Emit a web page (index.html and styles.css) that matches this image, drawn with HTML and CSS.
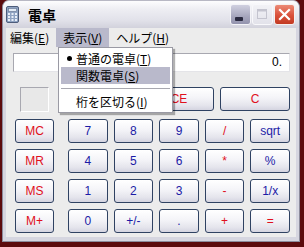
FILE: index.html
```html
<!DOCTYPE html>
<html lang="ja">
<head>
  <meta charset="UTF-8" />
  <title>電卓</title>
  <link rel="stylesheet" href="styles.css">
</head>
<body>
  <div class="window">
    <div class="titlebar">
      <svg class="app-icon" width="13" height="17" viewBox="0 0 13 17">
        <rect x="0.5" y="0.5" width="12" height="16" rx="1.5" fill="#8fa3c2" stroke="#4d5c7a"/>
        <rect x="2.5" y="2.5" width="8" height="3" fill="#e2ebf5" stroke="#5e6d8c" stroke-width="0.6"/>
        <rect x="2" y="7" width="2" height="2" fill="#e8eef8"/>
        <rect x="5.5" y="7" width="2" height="2" fill="#e8eef8"/>
        <rect x="9" y="7" width="2" height="2" fill="#e8eef8"/>
        <rect x="2" y="10" width="2" height="2" fill="#e8eef8"/>
        <rect x="5.5" y="10" width="2" height="2" fill="#e8eef8"/>
        <rect x="9" y="10" width="2" height="2" fill="#e8eef8"/>
        <rect x="2" y="13" width="2" height="2" fill="#e8eef8"/>
        <rect x="5.5" y="13" width="2" height="2" fill="#e8eef8"/>
        <rect x="9" y="13" width="2" height="2" fill="#e8eef8"/>
      </svg>
      <span class="title">電卓</span>
      <div class="caption">
        <span class="cap cap-min">
          <svg width="19" height="19" viewBox="0 0 19 19"><rect x="4" y="12" width="8" height="4" rx="1" fill="#2a2a40"/></svg>
        </span>
        <span class="cap cap-max">
          <svg width="19" height="19" viewBox="0 0 19 19"><rect x="4.5" y="4.5" width="9" height="9" fill="none" stroke="#c4c4cf"/><rect x="4.5" y="4.5" width="9" height="2" fill="#c4c4cf"/></svg>
        </span>
        <span class="cap cap-close">
          <svg width="19" height="19" viewBox="0 0 19 19"><path d="M5 5 L14 14 M14 5 L5 14" stroke="#fff" stroke-width="2.2" stroke-linecap="square"/></svg>
        </span>
      </div>
    </div>

    <div class="frame">
      <div class="client">
        <div class="menubar">
          <span class="menu-item">編集(<u>E</u>)</span>
          <span class="menu-item active">表示(<u>V</u>)</span>
          <span class="menu-item">ヘルプ(<u>H</u>)</span>
        </div>

        <div class="display">0.</div>

        <div class="keypad">
          <div class="mem-col">
            <div class="mem-slot"><div class="mem-indicator"></div></div>
            <button class="key red">MC</button>
            <button class="key red">MR</button>
            <button class="key red">MS</button>
            <button class="key red">M+</button>
          </div>

          <div class="main-col">
            <div class="top-row">
              <!-- Back, hidden under the open menu -->
              <button class="key red" aria-label="Back"></button>
              <button class="key red">CE</button>
              <button class="key red">C</button>
            </div>
            <div class="grid">
              <button class="key blue">7</button>
              <button class="key blue">8</button>
              <button class="key blue">9</button>
              <button class="key red">/</button>
              <button class="key blue">sqrt</button>

              <button class="key blue">4</button>
              <button class="key blue">5</button>
              <button class="key blue">6</button>
              <button class="key red">*</button>
              <button class="key blue">%</button>

              <button class="key blue">1</button>
              <button class="key blue">2</button>
              <button class="key blue">3</button>
              <button class="key red">-</button>
              <button class="key blue">1/x</button>

              <button class="key blue">0</button>
              <button class="key blue">+/-</button>
              <button class="key blue">.</button>
              <button class="key red">+</button>
              <button class="key red">=</button>
            </div>
          </div>
        </div>
      </div>
    </div>

    <!-- 表示 menu, open -->
    <div class="dropdown">
      <div class="drop-item"><span class="bullet"></span>普通の電卓(<u>T</u>)</div>
      <div class="drop-item hover">関数電卓(<u>S</u>)</div>
      <div class="drop-sep"></div>
      <div class="drop-item">桁を区切る(<u>I</u>)</div>
    </div>
  </div>
</body>
</html>
```

FILE: styles.css
```css
body {
  margin: 0;
  padding: 0;
  background: #5c0b0d;
  font-family: 'Noto Sans CJK JP', 'Liberation Sans', sans-serif;
  font-size: 12px;
  color: #000;
}
.window {
  position: relative;
  margin-left: 2px;
  width: 296px;
  height: 240px;
  border: 1px solid #8c8c9c;
  border-top-color: #b8b8c4;
  border-radius: 7px 7px 0 0;
  background: #d6d6e0;
}
.titlebar {
  height: 27px;
  display: flex;
  align-items: center;
  padding: 0 4px 0 3px;
  border-radius: 6px 6px 0 0;
  background: linear-gradient(#fdfdfe 0%, #eeeef3 30%, #e2e2ea 70%, #d2d2dc 100%);
}
.app-icon { flex: none; }
.title {
  margin-left: 9px;
  font-size: 14px;
  font-weight: bold;
}
.caption {
  margin-left: auto;
  display: flex;
  gap: 1px;
}
.cap {
  width: 19px;
  height: 19px;
  border: 1px solid #fff;
  border-radius: 3px;
  display: block;
}
.cap svg { display: block; }
.cap-min {
  background: linear-gradient(#d0d0e0, #a6a6bd 60%, #9494ae);
  border-color: #f4f4f8;
}
.cap-max {
  background: linear-gradient(#f2f2f6, #e2e2ea);
  border-color: #f8f8fb;
}
.cap-close {
  background: linear-gradient(#ec8a76, #d9503a 55%, #c23a22);
  border-color: #f6f0ee;
}
.frame {
  padding: 0 3px 3px 3px;
}
.client {
  background: #ececec;
  height: 209px;
  padding: 0 6px 0 7px;
}
.menubar {
  display: flex;
  height: 19px;
  margin-left: -10px;
  line-height: 19px;
}
.menu-item {
  padding: 0 7px;
}
.menu-item.active { background: #b9b9cb; }
u { text-decoration: underline; text-underline-offset: 1px; }
.display {
  margin-top: 6px;
  height: 17px;
  background: #fff;
  border: 1px solid #a8a8b0;
  border-right-color: #e4e4e8;
  border-bottom-color: #e4e4e8;
  font-family: 'Liberation Sans', sans-serif;
  font-size: 12px;
  line-height: 17px;
  text-align: right;
  padding-right: 7px;
}
.keypad {
  display: flex;
  gap: 14px;
  margin-top: 15px;
  padding-left: 2px;
}
.mem-col {
  width: 39px;
  display: flex;
  flex-direction: column;
  gap: 6px;
}
.mem-slot {
  height: 24px;
  margin-bottom: 2px;
  display: flex;
  justify-content: center;
}
.mem-indicator {
  width: 27px;
  height: 23px;
  background: #e8e8e8;
  border: 1px solid #a8a8b0;
  border-right-color: #fff;
  border-bottom-color: #fff;
}
.main-col {
  width: 222px;
}
.top-row {
  display: grid;
  grid-template-columns: repeat(3, 1fr);
  gap: 6px;
  margin-bottom: 8px;
}
.grid {
  display: grid;
  grid-template-columns: repeat(5, 1fr);
  column-gap: 6px;
  row-gap: 6px;
}
.key {
  height: 24px;
  padding: 0;
  border: 1px solid #2f4262;
  border-radius: 3px;
  background: linear-gradient(#ffffff 0%, #f4f4f8 45%, #e4e4ec 80%, #d4d4e0 100%);
  font-family: 'Liberation Sans', sans-serif;
  font-size: 12px;
}
.red { color: #e0101c; }
.blue { color: #1b1ba6; }
.dropdown {
  position: absolute;
  left: 55px;
  top: 46px;
  width: 109px;
  padding: 2px;
  background: #fff;
  border: 1px solid #9a9aa4;
  box-shadow: 2px 2px 1px rgba(0, 0, 0, 0.3);
}
.drop-item {
  position: relative;
  height: 17px;
  line-height: 17px;
  padding-left: 15px;
}
.drop-item.hover { background: #b9b9cb; }
.bullet {
  position: absolute;
  left: 6px;
  top: 6px;
  width: 5px;
  height: 5px;
  border-radius: 50%;
  background: #000;
}
.drop-sep {
  height: 1px;
  background: #a8a8b0;
  margin: 4px 0 4px 0;
}
```
